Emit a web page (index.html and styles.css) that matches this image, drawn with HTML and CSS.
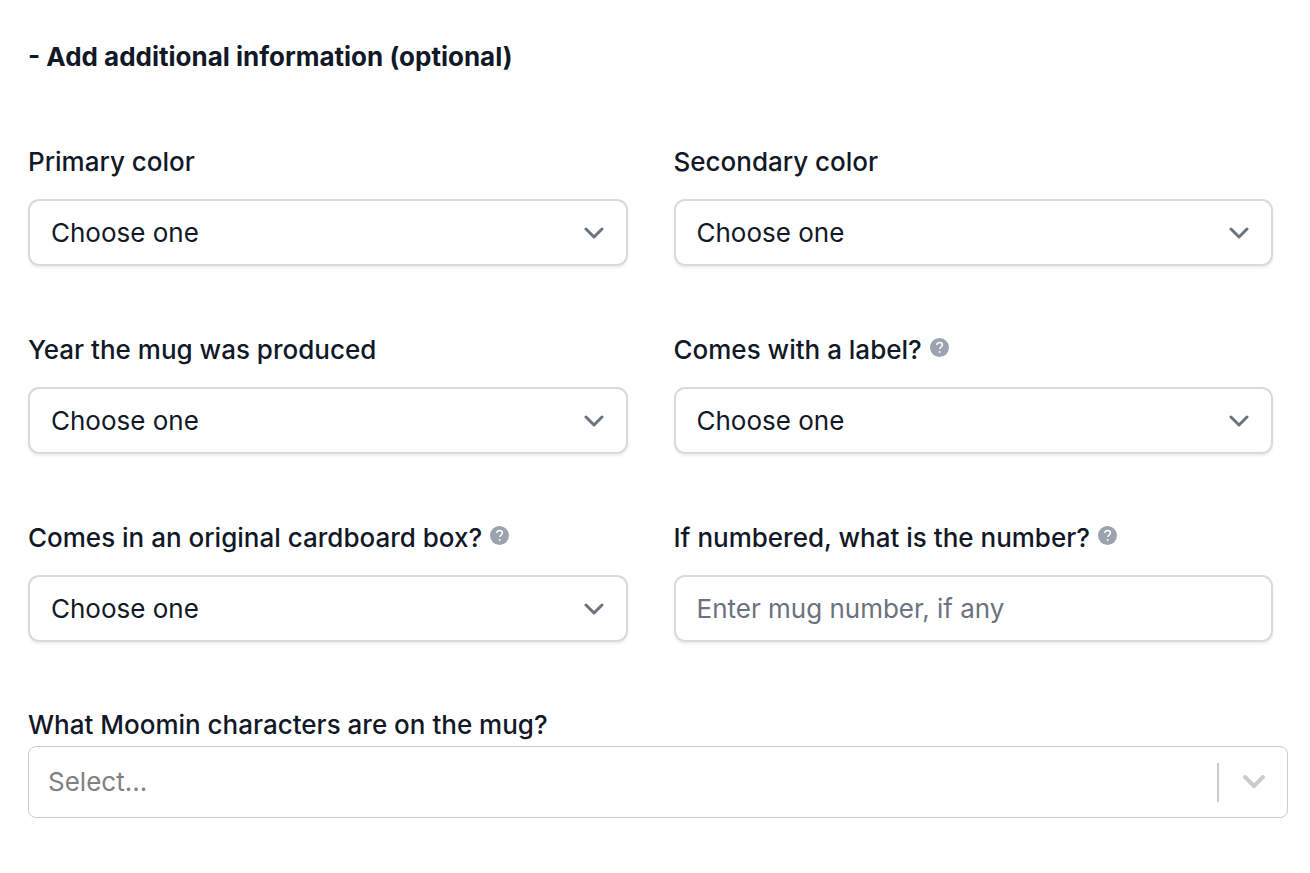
FILE: index.html
```html
<!DOCTYPE html>
<html lang="en">
<head>
<meta charset="utf-8">
<meta name="viewport" content="width=device-width, initial-scale=1">
<title>Additional information</title>
<link rel="stylesheet" href="styles.css">
</head>
<body>
<form class="form">
  <button type="button" class="toggle">- Add additional information (optional)</button>
  <div class="grid">
    <div class="field">
      <div class="label-row"><label for="primary">Primary color</label></div>
      <div class="control"><select id="primary"><option>Choose one</option></select>
        <svg class="chevron" viewBox="0 0 20 12" aria-hidden="true"><path d="M2 2l8 8 8-8"/></svg></div>
    </div>
    <div class="field">
      <div class="label-row"><label for="secondary">Secondary color</label></div>
      <div class="control"><select id="secondary"><option>Choose one</option></select>
        <svg class="chevron" viewBox="0 0 20 12" aria-hidden="true"><path d="M2 2l8 8 8-8"/></svg></div>
    </div>
    <div class="field">
      <div class="label-row"><label for="year">Year the mug was produced</label></div>
      <div class="control"><select id="year"><option>Choose one</option></select>
        <svg class="chevron" viewBox="0 0 20 12" aria-hidden="true"><path d="M2 2l8 8 8-8"/></svg></div>
    </div>
    <div class="field">
      <div class="label-row"><label for="tag">Comes with a label?</label>
        <svg class="help" viewBox="0 0 20 20" aria-hidden="true"><circle cx="10" cy="10" r="10"/><path d="M7.1 7.2c.4-1.5 1.5-2.4 3-2.4 1.7 0 2.9 1 2.9 2.5 0 2.1-2.7 2.2-2.7 4.3"/><circle class="dot" cx="10.2" cy="14.8" r="1"/></svg></div>
      <div class="control"><select id="tag"><option>Choose one</option></select>
        <svg class="chevron" viewBox="0 0 20 12" aria-hidden="true"><path d="M2 2l8 8 8-8"/></svg></div>
    </div>
    <div class="field">
      <div class="label-row"><label for="box">Comes in an original cardboard box?</label>
        <svg class="help" viewBox="0 0 20 20" aria-hidden="true"><circle cx="10" cy="10" r="10"/><path d="M7.1 7.2c.4-1.5 1.5-2.4 3-2.4 1.7 0 2.9 1 2.9 2.5 0 2.1-2.7 2.2-2.7 4.3"/><circle class="dot" cx="10.2" cy="14.8" r="1"/></svg></div>
      <div class="control"><select id="box"><option>Choose one</option></select>
        <svg class="chevron" viewBox="0 0 20 12" aria-hidden="true"><path d="M2 2l8 8 8-8"/></svg></div>
    </div>
    <div class="field">
      <div class="label-row"><label for="number">If numbered, what is the number?</label>
        <svg class="help" viewBox="0 0 20 20" aria-hidden="true"><circle cx="10" cy="10" r="10"/><path d="M7.1 7.2c.4-1.5 1.5-2.4 3-2.4 1.7 0 2.9 1 2.9 2.5 0 2.1-2.7 2.2-2.7 4.3"/><circle class="dot" cx="10.2" cy="14.8" r="1"/></svg></div>
      <div class="control"><input id="number" type="text" placeholder="Enter mug number, if any"></div>
    </div>
  </div>
  <div class="characters">
    <label for="characters">What Moomin characters are on the mug?</label>
    <div class="combo">
      <input id="characters" type="text" role="combobox" aria-expanded="false" placeholder="Select...">
      <span class="separator"></span>
      <button type="button" class="open" aria-label="Show characters"><svg viewBox="0 0 24 16" aria-hidden="true"><path d="M3 3l9 9 9-9"/></svg></button>
    </div>
  </div>
</form>
</body>
</html>
```
FILE: styles.css
```css
* {
  box-sizing: border-box;
}

body {
  margin: 0;
  background: #fff;
  color: #111827;
  font: 500 26px/36px Inter, "Liberation Sans", sans-serif;
}

input,
select,
button {
  font: inherit;
  color: inherit;
}

.form {
  padding: 39px 22px 48px 28px;
}

.toggle {
  display: block;
  padding: 0;
  border: 0;
  background: none;
  font-weight: 700;
}

.grid {
  display: grid;
  grid-template-columns: 1fr 1fr;
  gap: 66px 46px;
  margin: 69px 15px 0 0;
}

.label-row {
  display: flex;
  align-items: center;
  gap: 8px;
  margin-bottom: 19px;
}

.help {
  width: 19px;
  height: 19px;
  margin-bottom: 6px;
  fill: #9ca3af;
}

.help path {
  fill: none;
  stroke: #fff;
  stroke-width: 1.6;
}

.help .dot {
  fill: #fff;
}

.control {
  display: grid;
  align-items: center;
}

.control > * {
  grid-area: 1 / 1;
}

.control select,
.control input {
  appearance: none;
  width: 100%;
  height: 67px;
  padding: 0 21px;
  border: 2px solid #d8dade;
  border-radius: 11px;
  background: #fff;
  box-shadow: 0 2px 3px rgb(0 0 0 / 7%);
  font-weight: 400;
}

.control input::placeholder {
  color: #6b7280;
  opacity: 1;
}

.chevron {
  justify-self: end;
  width: 20px;
  height: 12px;
  margin-right: 24px;
  pointer-events: none;
  fill: none;
  stroke: #6b7280;
  stroke-width: 3;
  stroke-linecap: round;
  stroke-linejoin: round;
}

.characters {
  margin-top: 65px;
}

.characters label {
  display: block;
  margin-bottom: 3px;
}

.combo {
  display: flex;
  align-items: center;
  height: 72px;
  border: 1px solid #ccc;
  border-radius: 8px;
}

.combo input {
  flex: 1;
  min-width: 0;
  padding: 0 19px;
  border: 0;
  outline: 0;
  background: none;
  font-weight: 400;
}

.combo input::placeholder {
  color: #808080;
  opacity: 1;
}

.separator {
  width: 2px;
  height: 39px;
  background: #ccc;
}

.open {
  display: flex;
  padding: 0 21px 0 23px;
  border: 0;
  background: none;
}

.open svg {
  width: 24px;
  height: 16px;
  fill: none;
  stroke: #ccc;
  stroke-width: 4;
  stroke-linecap: round;
  stroke-linejoin: round;
}
```
